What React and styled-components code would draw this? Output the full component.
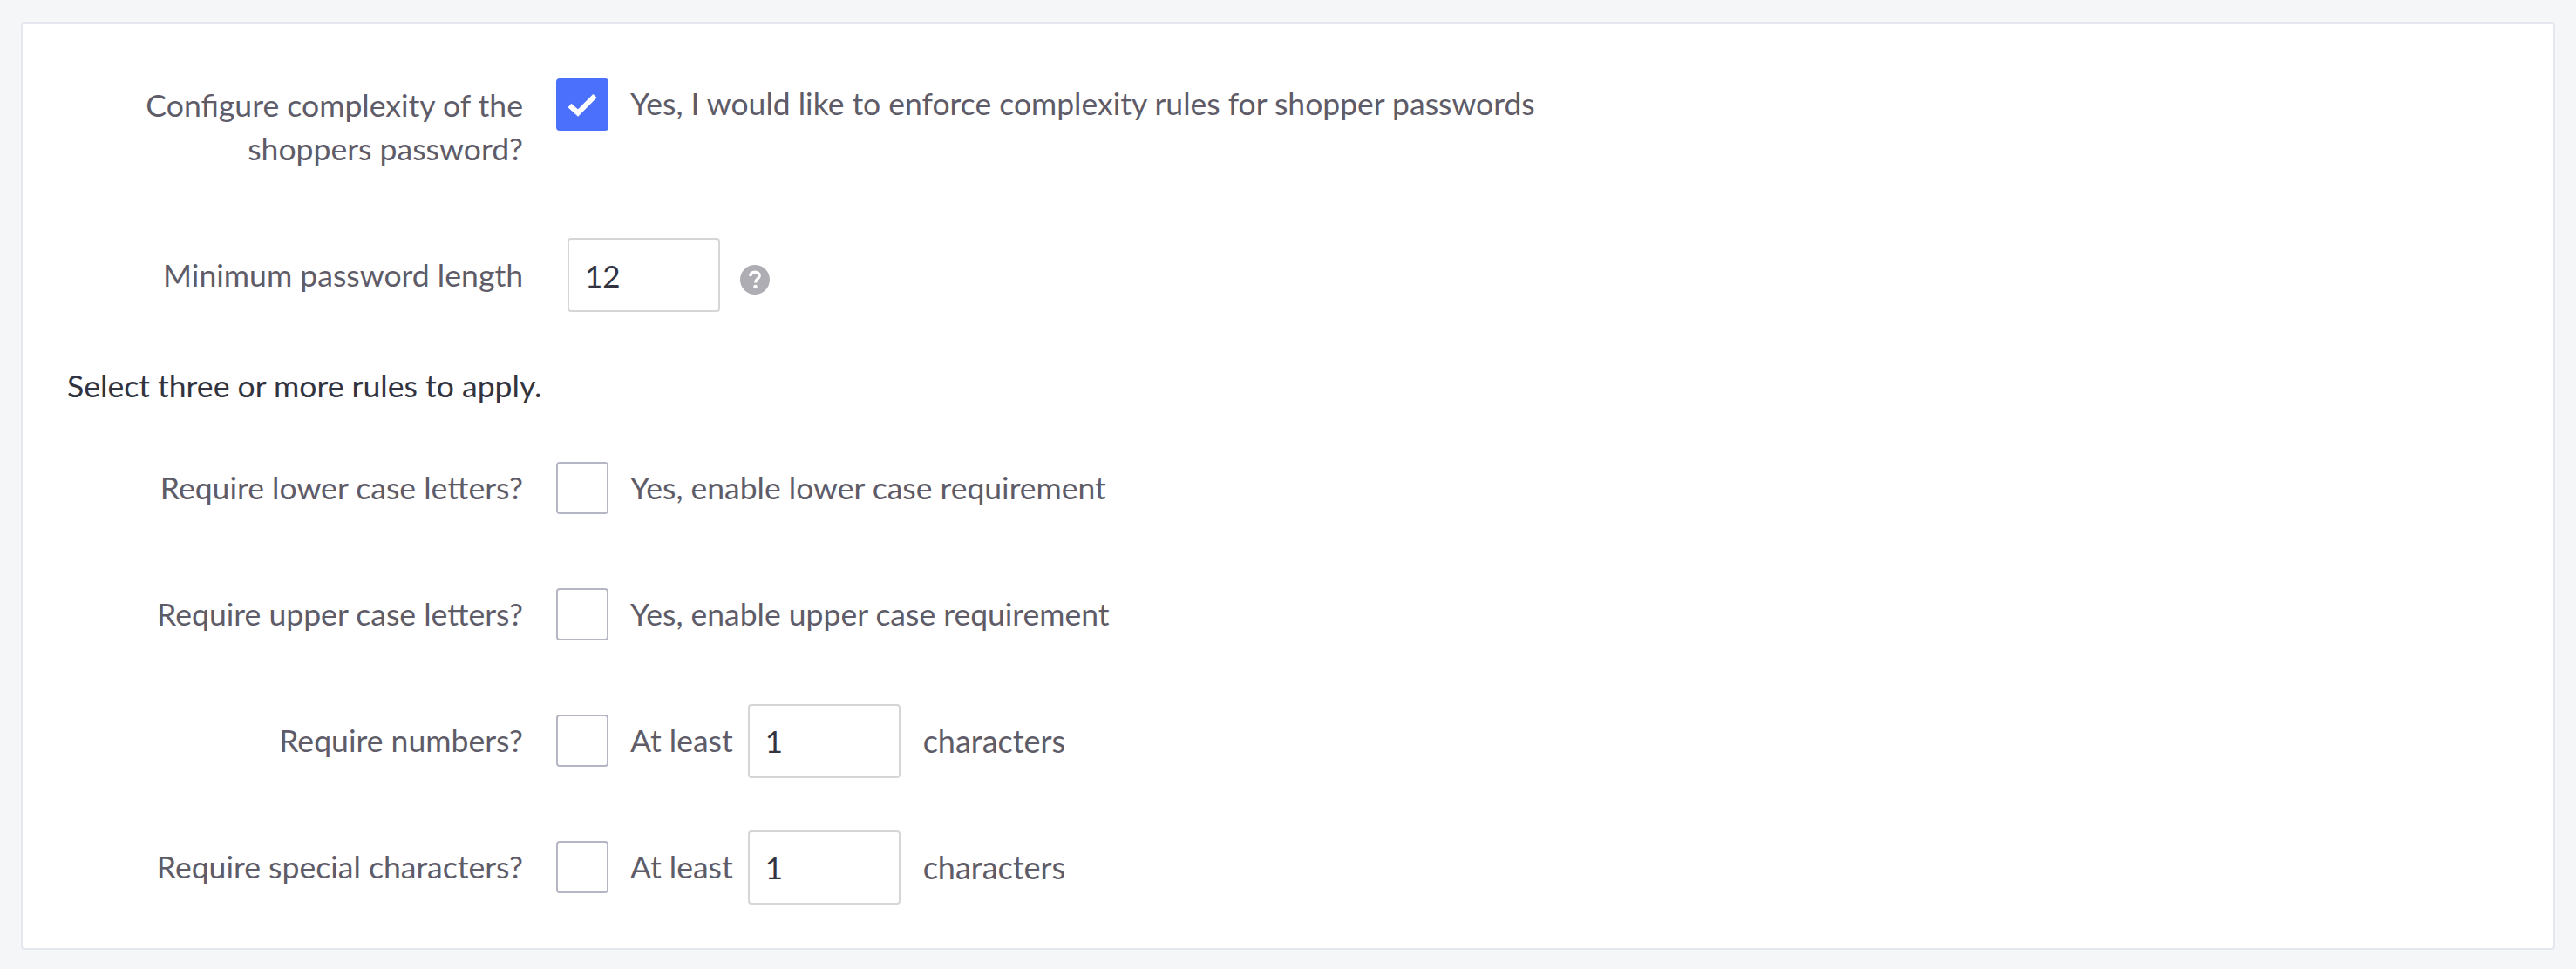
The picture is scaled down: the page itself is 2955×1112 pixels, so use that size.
import React from "react";
import styled, { createGlobalStyle } from "styled-components";

const GlobalStyle = createGlobalStyle`
*{
    box-sizing: border-box;
    margin: 0;
    padding: 0;
}
body{
    background-color: #F5F6F8;
    font-family: "Lato", "Noto Sans", sans-serif;
}`

const Card = styled.section`
margin: 25px 24px 22px;
height: 1065px;
padding: 63px 0 0 0;
background-color: #FFFFFF;
border: 2px solid #E5E7EE;
border-radius: 4px;
`
const Row = styled.div`
display: flex;
align-items: ${props => props.$top ? "flex-start" : "center"};
height: ${props => props.$top ? "123px" : "85px"};
margin-bottom: ${props => props.$last ? "0" : "60px"};
`
const Label = styled.label`
width: 574px;
flex-shrink: 0;
padding-left: 60px;
margin-right: 38px;
text-align: right;
font-size: 35.6px;
line-height: 50px;
color: #5E5C68;
padding-top: ${props => props.$top ? "6px" : "0"};
`
const Box = styled.span`
width: 60px;
height: 60px;
flex-shrink: 0;
display: flex;
border-radius: 4px;
background-color: ${props => props.$checked ? "#4B71FC" : "#FFFFFF"};
border: ${props => props.$checked ? "none" : "2px solid #B4B6C5"};
`
const BoxText = styled.span`
margin-left: 25px;
font-size: 35.5px;
line-height: 50px;
color: #5E5C68;
margin-top: ${props => props.$top ? "4px" : "0"};
`
const NumberField = styled.input`
width: 175px;
height: 85px;
margin-left: ${props => props.$first ? "13px" : "17px"};
padding: 0 18px;
border: 2px solid #D6D6D9;
border-radius: 4px;
background-color: #FFFFFF;
font-family: inherit;
font-size: 35px;
color: #313440;
outline: none;
`
const Trailing = styled.span`
margin-left: 26px;
font-size: 36px;
line-height: 50px;
color: #5E5C68;
`
const HelpIcon = styled.svg`
margin: 10px 0 0 23px;
width: 34px;
height: 34px;
flex-shrink: 0;
`
const RulesHint = styled.p`
padding-left: 51px;
font-size: 35.6px;
line-height: 50px;
color: #313440;
margin-bottom: 49.5px;
`

const Checkbox = ({ checked }) => (
    <Box $checked={checked}>
        {checked && (
            <svg width="60" height="60" viewBox="0 0 60 60">
                <polyline points="15.5,31 25,39.5 44.5,20" fill="none" stroke="#FFFFFF" strokeWidth="6" />
            </svg>
        )}
    </Box>
)

const QuestionIcon = () => (
    <HelpIcon viewBox="0 0 34 34">
        <circle cx="17" cy="17" r="17" fill="#AEADB4" />
        <path d="M11.8 13 C12 9.6 14.4 8.2 17 8.2 C20 8.2 22.2 10 22.2 12.6 C22.2 16 17.6 16.2 17.6 20.4" fill="none" stroke="#FFFFFF" strokeWidth="3.4" />
        <circle cx="17.5" cy="25" r="2.3" fill="#FFFFFF" />
    </HelpIcon>
)

const CountRule = ({ label, last }) => (
    <Row $last={last}>
        <Label>{label}</Label>
        <Checkbox />
        <BoxText>At least</BoxText>
        <NumberField defaultValue="1" />
        <Trailing>characters</Trailing>
    </Row>
)

export default function App(){
    return(
        <>
        <GlobalStyle/>
        <Card>
            <Row $top>
                <Label $top>Configure complexity of the shoppers password?</Label>
                <Checkbox checked />
                <BoxText $top>Yes, I would like to enforce complexity rules for shopper passwords</BoxText>
            </Row>
            <Row>
                <Label>Minimum password length</Label>
                <NumberField $first defaultValue="12" />
                <QuestionIcon />
            </Row>
            <RulesHint>Select three or more rules to apply.</RulesHint>
            <Row>
                <Label>Require lower case letters?</Label>
                <Checkbox />
                <BoxText>Yes, enable lower case requirement</BoxText>
            </Row>
            <Row>
                <Label>Require upper case letters?</Label>
                <Checkbox />
                <BoxText>Yes, enable upper case requirement</BoxText>
            </Row>
            <CountRule label="Require numbers?" />
            <CountRule label="Require special characters?" last />
        </Card>
        </>
    )
}
